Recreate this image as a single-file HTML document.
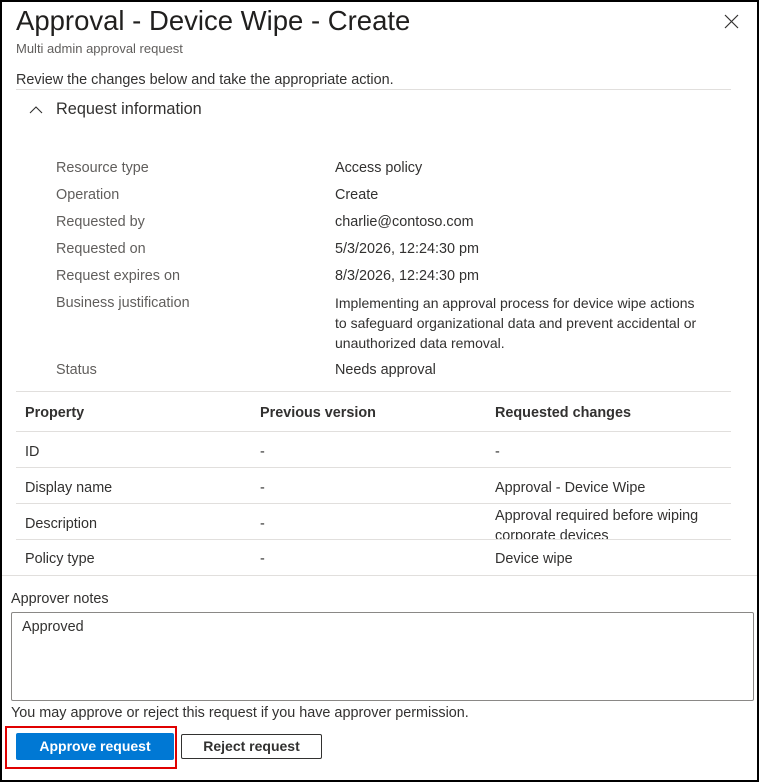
<!DOCTYPE html>
<html><head><meta charset="utf-8"><style>
*{margin:0;padding:0;box-sizing:border-box}
body{width:759px;height:782px;background:#fff;font-family:"Liberation Sans",sans-serif;color:#323130;position:relative;overflow:hidden}
.frame{position:absolute;left:0;top:0;width:759px;height:782px;border:2px solid #000}
.a{position:absolute;white-space:nowrap;line-height:20px;font-size:14.4px}
.l{color:#605e5c}
.hr{position:absolute;height:1px;background:#e1dfdd}
</style></head><body>
<div class="frame"></div>
<div class="a" style="left:16px;top:5px;font-size:27.5px;line-height:32px;color:#201f1e">Approval - Device Wipe - Create</div>
<svg style="position:absolute;left:724px;top:14px" width="15" height="15" viewBox="0 0 15 15"><path d="M1 1L14 14M14 1L1 14" stroke="#323130" stroke-width="1.2"/></svg>
<div class="a l" style="left:16px;top:39px;font-size:13px">Multi admin approval request</div>
<div class="a" style="left:16px;top:70px">Review the changes below and take the appropriate action.</div>
<div class="hr" style="left:16px;top:89px;width:715px"></div>
<svg style="position:absolute;left:29px;top:105px" width="14" height="10" viewBox="0 0 14 10"><path d="M1 8L7 2L13 8" fill="none" stroke="#323130" stroke-width="1.1"/></svg>
<div class="a" style="left:56px;top:98px;font-size:16.3px;line-height:22px">Request information</div>

<div class="a l" style="left:56px;top:158px">Resource type</div><div class="a" style="left:335px;top:158px">Access policy</div>
<div class="a l" style="left:56px;top:185px">Operation</div><div class="a" style="left:335px;top:185px">Create</div>
<div class="a l" style="left:56px;top:212px">Requested by</div><div class="a" style="left:335px;top:212px">charlie@contoso.com</div>
<div class="a l" style="left:56px;top:239px">Requested on</div><div class="a" style="left:335px;top:239px">5/3/2026, 12:24:30 pm</div>
<div class="a l" style="left:56px;top:266px">Request expires on</div><div class="a" style="left:335px;top:266px">8/3/2026, 12:24:30 pm</div>
<div class="a l" style="left:56px;top:293px">Business justification</div>
<div class="a" style="left:335px;top:293px;font-size:14px">Implementing an approval process for device wipe actions<br>to safeguard organizational data and prevent accidental or<br>unauthorized data removal.</div>
<div class="a l" style="left:56px;top:360px">Status</div><div class="a" style="left:335px;top:360px">Needs approval</div>
<div class="hr" style="left:16px;top:391px;width:715px"></div>

<div class="a" style="left:25px;top:403px;font-weight:bold;color:#323130">Property</div>
<div class="a" style="left:260px;top:403px;font-weight:bold">Previous version</div>
<div class="a" style="left:495px;top:403px;font-weight:bold">Requested changes</div>
<div class="hr" style="left:16px;top:431px;width:715px"></div>
<div class="a" style="left:25px;top:442px">ID</div><div class="a" style="left:260px;top:442px">-</div><div class="a" style="left:495px;top:442px">-</div>
<div class="hr" style="left:16px;top:467px;width:715px"></div>
<div class="a" style="left:25px;top:478px">Display name</div><div class="a" style="left:260px;top:478px">-</div><div class="a" style="left:495px;top:478px">Approval - Device Wipe</div>
<div class="hr" style="left:16px;top:503px;width:715px"></div>
<div class="a" style="left:25px;top:514px">Description</div><div class="a" style="left:260px;top:514px">-</div>
<div style="position:absolute;left:495px;top:504px;height:35px;overflow:hidden;width:235px"><div class="a" style="left:0;top:2px">Approval required before wiping<br>corporate devices</div></div>
<div class="hr" style="left:16px;top:539px;width:715px"></div>
<div class="a" style="left:25px;top:549px">Policy type</div><div class="a" style="left:260px;top:549px">-</div><div class="a" style="left:495px;top:549px">Device wipe</div>
<div class="hr" style="left:2px;top:575px;width:755px"></div>

<div class="a" style="left:11px;top:589px">Approver notes</div>
<div style="position:absolute;left:11px;top:612px;width:743px;height:89px;border:1px solid #8a8886;border-radius:2px"></div>
<div class="a" style="left:22px;top:617px">Approved</div>
<div class="a" style="left:11px;top:703px">You may approve or reject this request if you have approver permission.</div>
<div style="position:absolute;left:5px;top:726px;width:172px;height:43px;border:2px solid #e00000"></div>
<div style="position:absolute;left:16px;top:733px;width:158px;height:27px;background:#0078d4;border-radius:2px;color:#fff;font-weight:bold;font-size:14px;line-height:27px;text-align:center">Approve request</div>
<div style="position:absolute;left:181px;top:734px;width:141px;height:25px;border:1px solid #323130;border-radius:2px;color:#323130;font-weight:bold;font-size:14px;line-height:23px;text-align:center">Reject request</div>
</body></html>
